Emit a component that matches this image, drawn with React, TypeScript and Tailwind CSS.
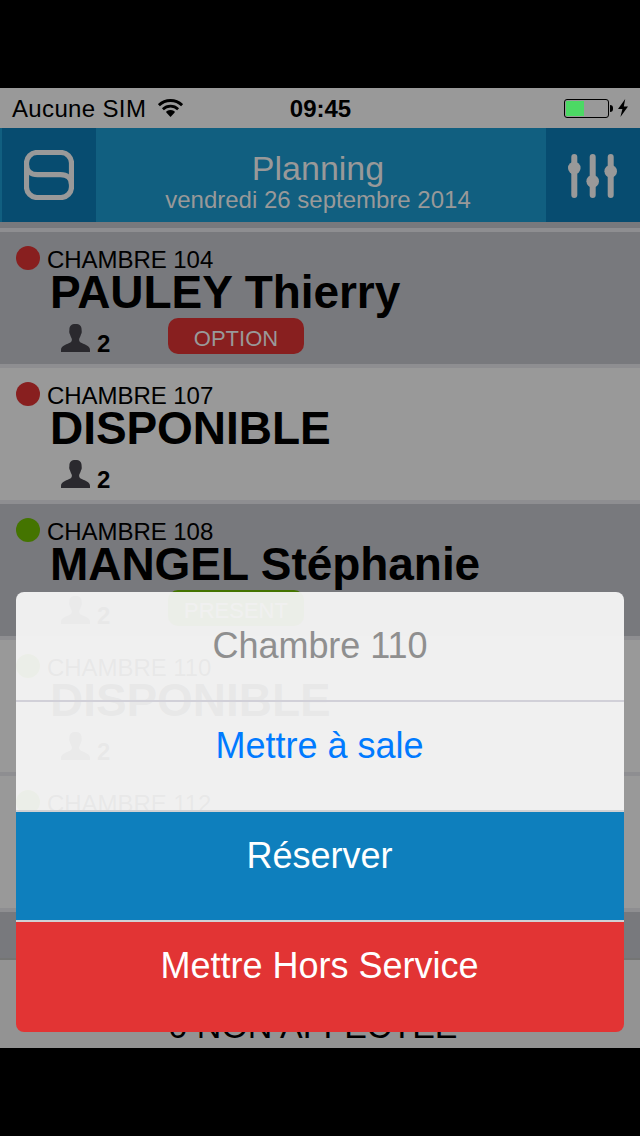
interface Room {
  number: string;
  guest: string;
  beds: number;
  dot: string;
  background: string;
  status?: string;
  badge?: string;
}

const rooms: Room[] = [
  {
    number: "104",
    guest: "PAULEY Thierry",
    beds: 2,
    dot: "bg-[#881f1f]",
    background: "bg-[#78797d]",
    status: "OPTION",
    badge: "bg-[#881f1f]",
  },
  {
    number: "107",
    guest: "DISPONIBLE",
    beds: 2,
    dot: "bg-[#881f1f]",
    background: "bg-[#999999]",
  },
  {
    number: "108",
    guest: "MANGEL Stéphanie",
    beds: 2,
    dot: "bg-[#447400]",
    background: "bg-[#78797d]",
    status: "PRESENT",
    badge: "bg-[#447400]",
  },
  {
    number: "110",
    guest: "DISPONIBLE",
    beds: 2,
    dot: "bg-[#447400]",
    background: "bg-[#999999]",
  },
  {
    number: "112",
    guest: "DISPONIBLE",
    beds: 2,
    dot: "bg-[#447400]",
    background: "bg-[#999999]",
  },
];

function StatusBar() {
  return (
    <div className="grid h-10 shrink-0 grid-cols-3 items-center bg-[#999999] pl-3 pr-3 text-2xl leading-none">
      <div className="flex items-center gap-3 pt-0.5">
        <span className="whitespace-nowrap tracking-[0.35px]">Aucune SIM</span>

        <svg width="25" height="18" viewBox="0 0 25 18" fill="none" stroke="#000" className="-mt-0.5">
          <path d="M0.9 6.2a16.6 16.6 0 0 1 23.2 0" strokeWidth="2.9" />
          <path d="M4.9 10.2a10.9 10.9 0 0 1 15.2 0" strokeWidth="2.7" />
          <path d="M12.5 18l-4-4.300c-.4-.6-.2-1.200.4-1.600a6.500 6.500 0 0 1 7.200 0c.6.4.8 1 .4 1.600z" fill="#000" stroke="none" />
        </svg>
      </div>

      <div className="pl-px pt-0.5 text-center font-bold">09:45</div>

      <div className="flex items-center justify-end">
        <div className="h-[19px] w-[45px] rounded-[3px] border border-black p-px">
          <div className="h-full w-[18px] bg-[#4cd964]"></div>
        </div>
        <div className="ml-px h-[7px] w-[3px] rounded-r-full bg-black"></div>
        <svg width="10" height="18" viewBox="0 0 10 18" className="ml-[5px]">
          <path d="M7.2 0L0 10h4.4L2.4 18 10 7.400H5.800z" />
        </svg>
      </div>
    </div>
  );
}

function Header() {
  return (
    <div className="flex h-[94px] shrink-0 bg-[#115f80] pl-0.5 text-[#999999]">
      <div className="flex w-[94px] items-center justify-center bg-[#074c70]">
        <svg width="50" height="50" viewBox="0 0 50 50" fill="none" stroke="#999999" strokeWidth="5.2">
          <rect x="2.500" y="2.500" width="45" height="45" rx="10.500" />
          <path d="M2.500 15c0 6 4.500 9.700 11 9.700h23c6.500 0 11 3.700 11 9.700" />
        </svg>
      </div>

      <div className="flex-1 pr-1.5 pt-[21px] text-center">
        <h1 className="text-[34px] leading-[38px]">Planning</h1>
        <p className="text-2xl leading-[26px]">vendredi 26 septembre 2014</p>
      </div>

      <div className="flex w-[94px] items-center justify-center bg-[#074c70] pt-0.5">
        <svg width="50" height="44" viewBox="0 0 50 44" stroke="#999999" strokeWidth="6" strokeLinecap="round" fill="#999999">
          <path d="M6.300 3v38M24.700 3v38M42.700 3v38" />
          <circle cx="6.300" cy="14" r="6.300" stroke="none" />
          <circle cx="24.700" cy="27.200" r="6.300" stroke="none" />
          <circle cx="42.700" cy="17.200" r="6.300" stroke="none" />
        </svg>
      </div>
    </div>
  );
}

function RoomRow({ room }: { room: Room }) {
  return (
    <div className={`h-[136px] shrink-0 border-b-4 border-[#8e8e91] pl-4 pt-3.5 ${room.background}`}>
      <div className="flex h-6 gap-[7px]">
        <span className={`size-6 rounded-full ${room.dot}`}></span>
        <span className="pt-0.5 text-2xl leading-6 tracking-[-0.05px]">CHAMBRE {room.number}</span>
      </div>

      <div className="h-12 pl-[34px] text-[46px] font-bold leading-[44px] tracking-[-0.06px]">{room.guest}</div>

      <div className="flex h-9 pl-[45px]">
        <svg width="29" height="28" viewBox="0 0 29 28" fill="#2a292e" className="mt-1.5">
          <path d="M14.500 0c4.200 0 6.100 2 6.100 5.500 0 1 .3 1.700.1 3-.1 1-.7 1.500-.9 2.500-.4 2-1.700 3.200-1.700 4.500 0 1.800.9 2.700 2.700 3.600C24.500 21 29 22.200 29 26v2H0v-2c0-3.800 4.500-5 8.200-6.900 1.800-.9 2.700-1.800 2.700-3.600 0-1.300-1.300-2.500-1.700-4.500-.2-1-.8-1.500-.9-2.500-.2-1.300.1-2 .1-3C8.400 2 10.300 0 14.500 0z" />
        </svg>
        <span className="w-[72px] pl-[7px] pt-3.5 text-2xl font-bold leading-6">{room.beds}</span>

        {room.status && (
          <span className={`ml-1.5 h-9 w-[136px] rounded-[10px] text-center text-[22px] leading-[41px] text-[#999999] ${room.badge}`}>
            {room.status}
          </span>
        )}
      </div>
    </div>
  );
}

function ActionSheet() {
  return (
    <div className="absolute left-4 top-[592px] w-[608px] overflow-hidden rounded-lg text-center text-4xl">
      <div className="h-[110px] border-b-2 border-[#d1d0d8] bg-[#f5f5f5]/[0.945] bg-clip-padding leading-[107px] tracking-[-0.05px] text-[#8f8f8f]">
        Chambre 110
      </div>
      <button className="block h-[110px] w-full border-b-2 border-[#d1d1d3] bg-[#f5f5f5]/[0.945] bg-clip-padding pb-[21px] pr-px leading-[87px] text-[#007aff]">
        Mettre à sale
      </button>
      <button className="block h-[110px] w-full border-b-2 border-[#d1d1d3] bg-[#0e7fbd] pb-[21px] pr-px leading-[87px] text-white">
        Réserver
      </button>
      <button className="block h-[110px] w-full bg-[#e23434] pb-[23px] pr-px leading-[87px] text-white">
        Mettre Hors Service
      </button>
    </div>
  );
}

export default function App() {
  return (
    <div className="relative flex h-[1136px] w-[640px] flex-col overflow-hidden bg-black py-[88px] font-['Liberation_Sans',Arial,sans-serif] text-black">
      <StatusBar />
      <Header />

      <div className="flex h-[738px] shrink-0 flex-col overflow-hidden border-b-2 border-[#747574] bg-[#78797d]">
        <div className="h-2.5 shrink-0 border-b-4 border-[#8e8e91] bg-[#78797d]"></div>

        {rooms.map((room) => (
          <RoomRow key={room.number} room={room} />
        ))}
      </div>

      <div className="h-[88px] shrink-0 overflow-hidden bg-[#939393] pr-3.5 pt-12 text-center text-[34px] leading-[36px]">
        0 NON AFFECTÉE
      </div>

      <ActionSheet />
    </div>
  );
}
